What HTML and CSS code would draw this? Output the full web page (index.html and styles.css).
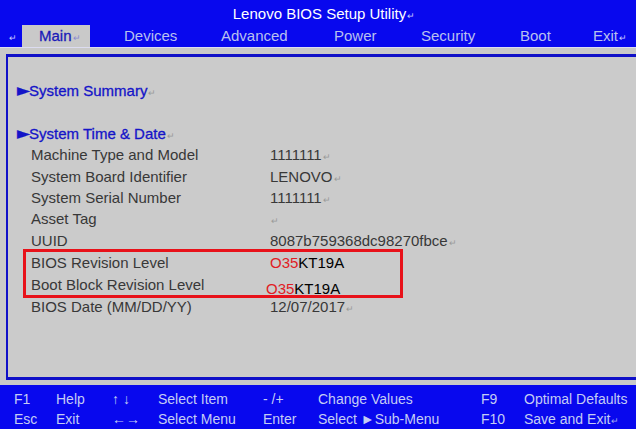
FILE: index.html
```html
<!DOCTYPE html>
<html>
<head>
<meta charset="utf-8">
<link rel="stylesheet" href="styles.css">
</head>
<body>
<div class="screen">
  <header class="header">
    <div class="title">Lenovo BIOS Setup Utility<span class="cr">↵</span></div>
    <nav class="tabs">
      <span class="tab t0"><span class="cr">↵</span></span>
      <span class="tab t1 active">Main<span class="cr">↵</span></span>
      <span class="tab t2">Devices</span>
      <span class="tab t3">Advanced</span>
      <span class="tab t4">Power</span>
      <span class="tab t5">Security</span>
      <span class="tab t6">Boot</span>
      <span class="tab t7">Exit<span class="cr">↵</span></span>
    </nav>
  </header>
  <main class="body">
    <section class="panel">
      <div class="row link"><span class="tri">►</span>System Summary<span class="cr">↵</span></div>
      <div class="row"></div>
      <div class="row link"><span class="tri">►</span>System Time &amp; Date<span class="cr">↵</span></div>
      <div class="row item"><span>Machine Type and Model</span><span>1111111<span class="cr">↵</span></span></div>
      <div class="row item"><span>System Board Identifier</span><span>LENOVO<span class="cr">↵</span></span></div>
      <div class="row item"><span>System Serial Number</span><span>1111111<span class="cr">↵</span></span></div>
      <div class="row item"><span>Asset Tag</span><span><span class="cr">↵</span></span></div>
      <div class="row item"><span>UUID</span><span>8087b759368dc98270fbce<span class="cr">↵</span></span></div>
      <div class="mark">
        <div class="row item"><span>BIOS Revision Level</span><span class="rev"><span class="red">O35</span>KT19A</span></div>
        <div class="row item"><span>Boot Block Revision Level</span><span class="rev low"><span class="red">O35</span>KT19A</span></div>
      </div>
      <div class="row item"><span>BIOS Date (MM/DD/YY)</span><span>12/07/2017<span class="cr">↵</span></span></div>
    </section>
  </main>
  <footer class="footer">
    <div class="frow">
      <span class="c1">F1</span><span class="c2">Help</span><span class="c3">↑ ↓</span><span class="c4">Select Item</span><span class="c5">- /+</span><span class="c6">Change Values</span><span class="c7">F9</span><span class="c8">Optimal Defaults</span>
    </div>
    <div class="frow">
      <span class="c1">Esc</span><span class="c2">Exit</span><span class="c3">←→</span><span class="c4">Select Menu</span><span class="c5">Enter</span><span class="c6">Select ►Sub-Menu</span><span class="c7">F10</span><span class="c8">Save and Exit<span class="cr">↵</span></span>
    </div>
  </footer>
</div>
</body>
</html>
```

FILE: styles.css
```css
* { box-sizing: border-box; }
html, body { margin: 0; padding: 0; }
body {
  width: 636px;
  height: 429px;
  overflow: hidden;
  background: #c9c9c9;
  font-family: "Liberation Sans", Arial, sans-serif;
}
.screen {
  width: 636px;
  height: 429px;
  display: flex;
  flex-direction: column;
}
.cr {
  font-size: 9px;
  color: #9a9a9a;
  margin-left: 1px;
}
.header {
  background: #0808ee;
  height: 47px;
  display: flex;
  flex-direction: column;
}
.title {
  height: 25px;
  line-height: 28px;
  text-align: center;
  color: #ffffff;
  font-size: 15px;
  padding-left: 12px;
}
.title .cr { color: #c8c8ff; }
.tabs {
  display: flex;
  height: 22px;
}
.tab {
  color: #b9c0ee;
  font-size: 15px;
  line-height: 22px;
  white-space: nowrap;
}
.tab .cr { color: #c8c8ff; }
.t0 { width: 22px; padding-left: 8px; }
.t1 { width: 68px; padding-left: 17px; }
.t2 { width: 131px; padding-left: 34px; }
.t3 { width: 113px; }
.t4 { width: 87px; }
.t5 { width: 99px; }
.t6 { width: 73px; }
.t7 { flex: 1; }
.t1.active {
  background: #c9c9c9;
  color: #1a1ab8;
  -webkit-text-stroke: 0.3px #1a1ab8;
}
.t1.active .cr { color: #8a8ad0; -webkit-text-stroke: 0; }
.body {
  flex: 1;
  padding: 6px 0 5px 6px;
  background: #c9c9c9;
  border-top: 1px solid #dcdcf0;
}
.panel {
  height: 100%;
  border-top: 3px solid #1010c8;
  border-left: 2px solid #1010c8;
  border-bottom: 3px solid #1010c8;
  background: #cbcbcb;
  padding-top: 23px;
}
.row {
  height: 21.4px;
  line-height: 21.4px;
  font-size: 15px;
  color: #383838;
  white-space: nowrap;
}
.link {
  color: #1414c8;
  padding-left: 9px;
  -webkit-text-stroke: 0.3px #1414c8;
}
.link .cr { -webkit-text-stroke: 0; }
.tri { font-size: 17px; font-family: "DejaVu Sans", sans-serif; letter-spacing: -1px; }
.item {
  display: grid;
  grid-template-columns: 239px 1fr;
  padding-left: 23px;
}
.mark {
  margin: -2px 0 -2px 15px;
  width: 380px;
  border: 3px solid #e8121a;
}
.mark .item {
  padding-left: 5px;
}
.rev {
  font-family: "Liberation Sans", Arial, sans-serif;
  font-size: 15px;
  color: #000000;
}
.rev.low {
  position: relative;
  top: 4px;
  margin-left: -4px;
}
.red { color: #e01c24; }
.footer {
  background: #0808ee;
  height: 44px;
  padding-top: 4px;
  color: #c4ccf4;
  font-size: 14px;
}
.frow {
  display: flex;
  height: 20px;
  line-height: 20px;
  white-space: nowrap;
}
.frow .cr { color: #a0a8f0; }
.c1 { width: 56px; padding-left: 14px; }
.c2 { width: 54px; }
.c3 { width: 48px; padding-left: 2px; }
.c4 { width: 105px; }
.c5 { width: 55px; }
.c6 { width: 163px; }
.c7 { width: 43px; }
.c8 { flex: 1; }
```
